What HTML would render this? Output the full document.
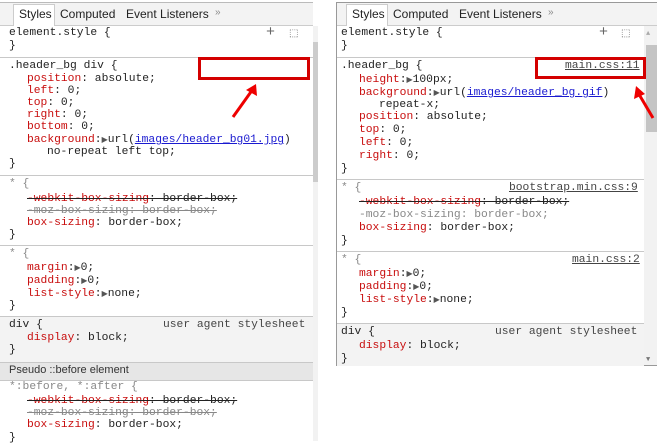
<!DOCTYPE html>
<html><head><meta charset="utf-8"><style>
body{margin:0;width:658px;height:441px;background:#fff;position:relative;overflow:hidden;font-family:"Liberation Mono",monospace;font-size:11.3px;color:#222}
.l{position:absolute;white-space:pre;line-height:13px;height:13px;margin-top:1px}
.p{color:#c80d0d}
.g{color:#888}
.s{text-decoration:line-through}
.a{color:#1a1ad0;text-decoration:underline}
.f{color:#444;text-decoration:underline}
.t{font-size:8px;color:#555}
.sep{position:absolute;height:1px;background:#c8c8c8}
.tab{position:absolute;font-family:"Liberation Sans",sans-serif;font-size:12px;top:7px;color:#222}
.box{position:absolute;border:3px solid #d40000;box-sizing:border-box}
</style></head><body>
<!-- LEFT PANEL -->
<div style="position:absolute;left:0;top:2px;width:313px;height:1px;background:#bbb"></div>
<div style="position:absolute;left:0;top:3px;width:313px;height:22px;background:#f3f3f3;border-bottom:1px solid #ccc"></div>
<div style="position:absolute;left:13px;top:4px;width:40px;height:21px;background:#fff;border:1px solid #ccc;border-bottom:none"></div>
<div class="tab" style="left:19px">Styles</div>
<div class="tab" style="left:60px">Computed</div>
<div class="tab" style="left:126px">Event Listeners</div>
<div class="tab" style="left:215px;color:#888;font-size:10px">»</div>
<div style="position:absolute;left:313px;top:26px;width:5px;height:415px;background:#f2f2f2"></div>
<div style="position:absolute;left:313px;top:42px;width:5px;height:140px;background:#ccc"></div>

<div class="l" style="left:9px;top:26px">element.style {</div>
<div class="l" style="left:266px;top:25px;font-size:15px;color:#666">+</div>
<div class="l" style="left:289px;top:27px;font-size:10px;color:#666">⬚</div>
<div class="l" style="left:9px;top:39px">}</div>
<div class="sep" style="left:0;top:57px;width:313px"></div>
<div class="l" style="left:9px;top:59px">.header_bg div {</div>
<div class="l" style="left:27px;top:72px"><span class="p">position</span>: absolute;</div>
<div class="l" style="left:27px;top:84px"><span class="p">left</span>: 0;</div>
<div class="l" style="left:27px;top:96px"><span class="p">top</span>: 0;</div>
<div class="l" style="left:27px;top:108px"><span class="p">right</span>: 0;</div>
<div class="l" style="left:27px;top:120px"><span class="p">bottom</span>: 0;</div>
<div class="l" style="left:27px;top:133px"><span class="p">background</span>:<span class="t">▶</span>url(<span class="a">images/header_bg01.jpg</span>)</div>
<div class="l" style="left:47px;top:145px">no-repeat left top;</div>
<div class="l" style="left:9px;top:157px">}</div>
<div class="sep" style="left:0;top:175px;width:313px"></div>
<div class="l g" style="left:9px;top:177px">* {</div>
<div class="l s" style="left:27px;top:192px"><span class="p">-webkit-box-sizing</span>: border-box;</div>
<div class="l s g" style="left:27px;top:204px">-moz-box-sizing: border-box;</div>
<div class="l" style="left:27px;top:216px"><span class="p">box-sizing</span>: border-box;</div>
<div class="l" style="left:9px;top:228px">}</div>
<div class="sep" style="left:0;top:245px;width:313px"></div>
<div class="l g" style="left:9px;top:247px">* {</div>
<div class="l" style="left:27px;top:261px"><span class="p">margin</span>:<span class="t">▶</span>0;</div>
<div class="l" style="left:27px;top:274px"><span class="p">padding</span>:<span class="t">▶</span>0;</div>
<div class="l" style="left:27px;top:287px"><span class="p">list-style</span>:<span class="t">▶</span>none;</div>
<div class="l" style="left:9px;top:299px">}</div>
<div style="position:absolute;left:0;top:316px;width:313px;height:46px;background:#f3f3f3;border-top:1px solid #c8c8c8"></div>
<div class="l" style="left:9px;top:318px">div {</div>
<div class="l" style="left:163px;top:318px;color:#444">user agent stylesheet</div>
<div class="l" style="left:27px;top:331px"><span class="p">display</span>: block;</div>
<div class="l" style="left:9px;top:343px">}</div>
<div style="position:absolute;left:0;top:362px;width:313px;height:17px;background:#e6e6e6;border-top:1px solid #c8c8c8;border-bottom:1px solid #c8c8c8"></div>
<div class="l" style="left:9px;top:363px;font-family:'Liberation Sans',sans-serif;font-size:11px;color:#333">Pseudo ::before element</div>
<div class="l g" style="left:9px;top:380px">*:before, *:after {</div>
<div class="l s" style="left:27px;top:394px"><span class="p">-webkit-box-sizing</span>: border-box;</div>
<div class="l s g" style="left:27px;top:406px">-moz-box-sizing: border-box;</div>
<div class="l" style="left:27px;top:418px"><span class="p">box-sizing</span>: border-box;</div>
<div class="l" style="left:9px;top:431px">}</div>

<div class="box" style="left:198px;top:57px;width:112px;height:23px"></div>
<svg style="position:absolute;left:225px;top:80px" width="40" height="42"><line x1="8" y1="37" x2="28" y2="9" stroke="#e00" stroke-width="3"/><polygon points="31,4 21,10 32,16" fill="#e00"/></svg>

<!-- RIGHT PANEL -->
<div style="position:absolute;left:336px;top:2px;width:321px;height:364px;border:1px solid #999;box-sizing:border-box"></div>
<div style="position:absolute;left:337px;top:3px;width:320px;height:22px;background:#f3f3f3;border-bottom:1px solid #ccc"></div>
<div style="position:absolute;left:346px;top:4px;width:40px;height:21px;background:#fff;border:1px solid #ccc;border-bottom:none"></div>
<div class="tab" style="left:352px">Styles</div>
<div class="tab" style="left:393px">Computed</div>
<div class="tab" style="left:459px">Event Listeners</div>
<div class="tab" style="left:548px;color:#888;font-size:10px">»</div>
<div style="position:absolute;left:644px;top:26px;width:13px;height:339px;background:#f2f2f2"></div>
<div style="position:absolute;left:646px;top:45px;width:11px;height:87px;background:#c4c4c4"></div>
<div class="l" style="left:646px;top:27px;font-size:7px;color:#aaa">▲</div>
<div class="l" style="left:646px;top:353px;font-size:7px;color:#777">▼</div>

<div class="l" style="left:341px;top:26px">element.style {</div>
<div class="l" style="left:599px;top:25px;font-size:15px;color:#666">+</div>
<div class="l" style="left:621px;top:27px;font-size:10px;color:#666">⬚</div>
<div class="l" style="left:341px;top:39px">}</div>
<div class="sep" style="left:337px;top:57px;width:307px"></div>
<div class="l" style="left:341px;top:59px">.header_bg {</div>
<div class="l f" style="left:565px;top:59px">main.css:11</div>
<div class="l" style="left:359px;top:73px"><span class="p">height</span>:<span class="t">▶</span>100px;</div>
<div class="l" style="left:359px;top:86px"><span class="p">background</span>:<span class="t">▶</span>url(<span class="a">images/header_bg.gif</span>)</div>
<div class="l" style="left:379px;top:98px">repeat-x;</div>
<div class="l" style="left:359px;top:110px"><span class="p">position</span>: absolute;</div>
<div class="l" style="left:359px;top:123px"><span class="p">top</span>: 0;</div>
<div class="l" style="left:359px;top:136px"><span class="p">left</span>: 0;</div>
<div class="l" style="left:359px;top:149px"><span class="p">right</span>: 0;</div>
<div class="l" style="left:341px;top:162px">}</div>
<div class="sep" style="left:337px;top:179px;width:307px"></div>
<div class="l g" style="left:341px;top:181px">* {</div>
<div class="l f" style="left:509px;top:181px">bootstrap.min.css:9</div>
<div class="l s" style="left:359px;top:195px"><span class="p">-webkit-box-sizing</span>: border-box;</div>
<div class="l g" style="left:359px;top:208px">-moz-box-sizing: border-box;</div>
<div class="l" style="left:359px;top:221px"><span class="p">box-sizing</span>: border-box;</div>
<div class="l" style="left:341px;top:234px">}</div>
<div class="sep" style="left:337px;top:251px;width:307px"></div>
<div class="l g" style="left:341px;top:253px">* {</div>
<div class="l f" style="left:572px;top:253px">main.css:2</div>
<div class="l" style="left:359px;top:267px"><span class="p">margin</span>:<span class="t">▶</span>0;</div>
<div class="l" style="left:359px;top:280px"><span class="p">padding</span>:<span class="t">▶</span>0;</div>
<div class="l" style="left:359px;top:293px"><span class="p">list-style</span>:<span class="t">▶</span>none;</div>
<div class="l" style="left:341px;top:306px">}</div>
<div style="position:absolute;left:337px;top:323px;width:307px;height:42px;background:#f3f3f3;border-top:1px solid #c8c8c8"></div>
<div class="l" style="left:341px;top:325px">div {</div>
<div class="l" style="left:495px;top:325px;color:#444">user agent stylesheet</div>
<div class="l" style="left:359px;top:339px"><span class="p">display</span>: block;</div>
<div class="l" style="left:341px;top:352px">}</div>

<div class="box" style="left:535px;top:57px;width:111px;height:22px"></div>
<svg style="position:absolute;left:630px;top:82px" width="28" height="40"><line x1="23" y1="36" x2="10" y2="14" stroke="#e00" stroke-width="3"/><polygon points="6,4 4,17 15,12" fill="#e00"/></svg>
</body></html>
